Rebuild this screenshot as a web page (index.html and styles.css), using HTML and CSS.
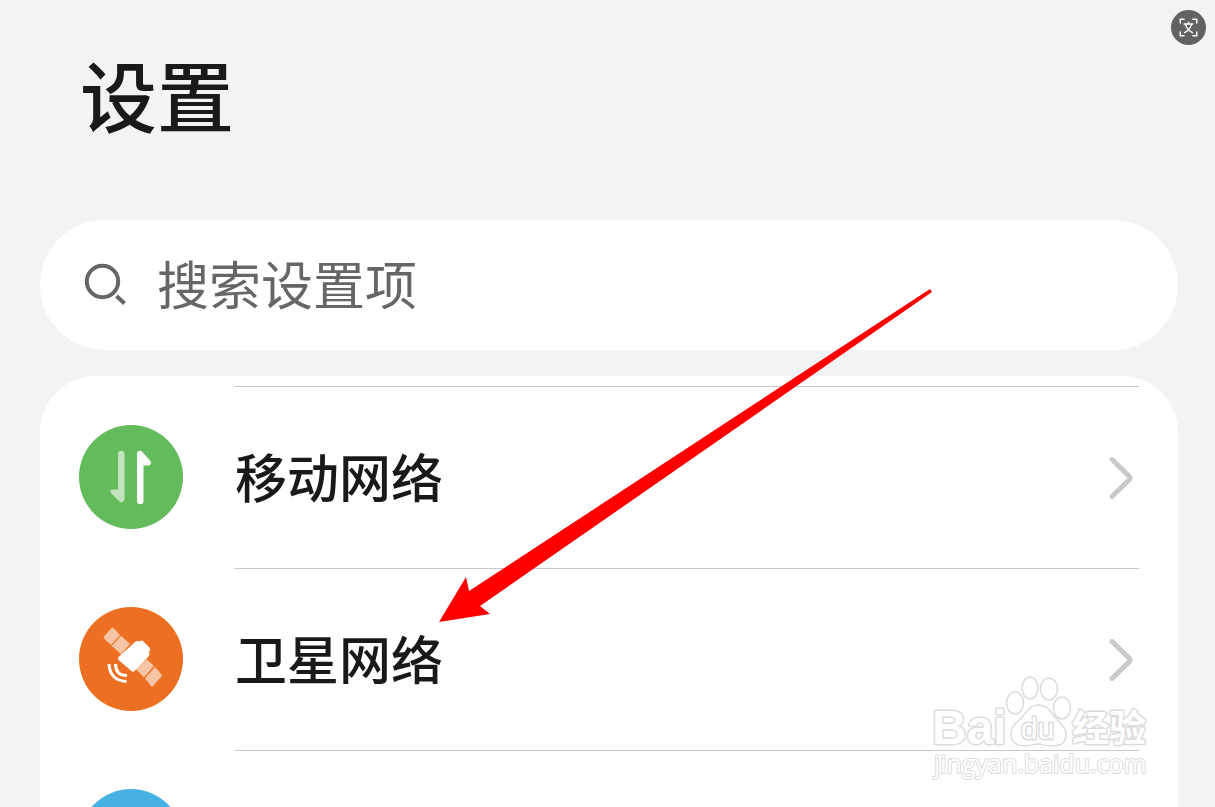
FILE: index.html
```
<!DOCTYPE html>
<html lang="zh-CN">
    <head>
        <meta charset="utf-8">
        <meta name="viewport" content="width=device-width, initial-scale=1">
        <title>设置</title>
        <link rel="stylesheet" href="styles.css">
    </head>
    <body>
        <header>
            <h1>设置</h1>
        </header>
        <main>
            <form class="search">
                <svg class="search-icon" viewBox="0 0 44 44" aria-hidden="true">
                    <circle cx="18.500" cy="18.500" r="15.700"/>
                    <path d="M32.500 33L40.500 40.500"/>
                </svg>
                <input type="search" aria-label="搜索设置项" placeholder="搜索设置项">
            </form>
            <ul class="list">
                <li>
                    <a href="#mobile">
                        <span class="icon green">
                            <svg viewBox="0 0 104 104" aria-hidden="true">
                                <path class="faded" d="M39 29a3 3 0 0 1 6.500 0V74.500a3 3 0 0 1-5 2L32 68c-1.500-2 0-3.500 2-3.500h5z"/>
                                <path d="M58 29a3 3 0 0 1 5-2.500L71.500 36c1.500 2 0 4.500-2 4.500h-5V76a3 3 0 0 1-6.500 0z"/>
                            </svg>
                        </span>
                        <span class="body">
                            <span class="name">移动网络</span>
                            <svg class="chevron" viewBox="0 0 24 42" aria-hidden="true"><path d="M3 2.500L20 19q2 2 0 4L3 39.500"/></svg>
                        </span>
                    </a>
                </li>
                <li>
                    <a href="#satellite">
                        <span class="icon orange">
                            <svg viewBox="0 0 104 104" aria-hidden="true">
                                <g class="faded">
                                    <path d="M34.500 21l6.500 7-9 10-7-6.500q-1-1 0-2l7.500-8.500q1-1 2 0z"/>
                                    <path d="M42 28.700l9 8.300-9 10.300-9.300-8.600z"/>
                                    <path d="M67.700 52.300L75 59 65 70.300 56.700 62z"/>
                                    <path d="M76 60l6.500 7.500q1 1 0 2L74 79q-1 1-2 0l-6-7.700z"/>
                                </g>
                                <path d="M56 35q1-1 2.500-1l1.500.5 2-.8q1.500-.4 2.500.8l6 6q1 1 .5 2.500l-1 1.500.5 2.500q0 1.500-1 2.500L55.500 64q-1.500 1.500-3 0l-13-11q-1.500-1.500 0-3z"/>
                                <path class="wave" d="M36.500 57q0 11.500 11.500 11.500M30 57q1 16.500 17.500 17.500"/>
                            </svg>
                        </span>
                        <span class="body">
                            <span class="name">卫星网络</span>
                            <svg class="chevron" viewBox="0 0 24 42" aria-hidden="true"><path d="M3 2.500L20 19q2 2 0 4L3 39.500"/></svg>
                        </span>
                    </a>
                </li>
                <li>
                    <div class="row">
                        <span class="icon blue"></span>
                        <span class="body"></span>
                    </div>
                </li>
            </ul>
        </main>

        <button class="translate" type="button" aria-label="翻译">
            <svg viewBox="0 0 36 36" aria-hidden="true">
                <path d="M9.500 14v-4.500H14M22 9.500h4.500V14M26.500 22v4.500H22M14 26.500H9.500V22"/>
                <path d="M18 12v2.500M13 14.500h10M15 15q1.500 5.500 7.500 8.500M21 15q-1.500 5.500-7.500 8.500"/>
            </svg>
        </button>

        <svg class="arrow" viewBox="0 0 494 334" aria-hidden="true">
            <path d="M0 333L27 288 30 302 491 0 493 3 41 317 51 325z"/>
        </svg>

        <svg class="watermark" viewBox="0 0 240 115" role="img" aria-label="Baidu 经验">
            <text class="bai" x="12" y="74">Bai</text>
            <ellipse cx="95" cy="33" rx="8.500" ry="11"/>
            <ellipse cx="110" cy="18" rx="8" ry="11"/>
            <ellipse cx="129" cy="19" rx="8.500" ry="11"/>
            <ellipse cx="142" cy="38" rx="8.500" ry="11"/>
            <path d="M118 35c8 0 11 4 16 11s12 10 12 19-7 11-14 11-9-2-14-2-8 2-14 2-13-3-13-12 7-12 12-18 8-11 15-11z"/>
            <text class="du" x="101" y="69">du</text>
            <text class="jingyan" x="152" y="72">经验</text>
            <text class="site" x="14" y="103">jingyan.baidu.com</text>
        </svg>
    </body>
</html>
```
FILE: styles.css
```
* {
    box-sizing: border-box;
}

body {
    margin: 0;
    height: 100vh;
    overflow: hidden;
    position: relative;
    font-family: "Noto Sans CJK SC", "Noto Sans", sans-serif;
    color: #19191a;
    background-color: #f1f3f5;
}

header {
    padding: 34px 80px 66px;
}

h1 {
    margin: 0;
    font-size: 77px;
    line-height: 120px;
    font-weight: 500;
}

main {
    padding: 0 37px 0 40px;
}

.search {
    display: flex;
    align-items: center;
    height: 130px;
    padding: 0 44px;
    gap: 29px;
    border-radius: 65px;
    background-color: #fff;
}

.search-icon {
    width: 44px;
    height: 44px;
    fill: none;
    stroke: #666;
    stroke-width: 4;
}

.search input {
    flex: 1;
    min-width: 0;
    height: 84px;
    padding: 0 0 5px;
    border: none;
    outline: none;
    background: transparent;
    font-family: inherit;
    font-size: 52px;
    color: #19191a;
}

.search input::placeholder {
    color: #666;
    opacity: 1;
}

.list {
    list-style: none;
    margin: 26px 0 0;
    padding: 10px 39px 0;
    border-radius: 56px 56px 0 0;
    background-color: #fff;
}

.list a,
.row {
    display: flex;
    align-items: center;
    gap: 52px;
    height: 182px;
    color: inherit;
    text-decoration: none;
}

.icon {
    width: 104px;
    height: 104px;
    border-radius: 50%;
}

.icon svg {
    display: block;
    fill: #fff;
}

.faded {
    opacity: 0.6;
}

.wave {
    fill: none;
    stroke: #fff;
    stroke-width: 3;
}

.green {
    background-color: #64bb5c;
}

.orange {
    background-color: #ed6f21;
}

.blue {
    background-color: #46b1e3;
}

.body {
    flex: 1;
    display: flex;
    align-items: center;
    justify-content: space-between;
    height: 100%;
    padding-right: 6px;
    border-top: 1px solid #c8c8c8;
    font-size: 52px;
    font-weight: 500;
}

.name {
    padding-bottom: 5px;
}

.chevron {
    width: 24px;
    height: 42px;
    fill: none;
    stroke: #c9c9c9;
    stroke-width: 5;
    stroke-linecap: round;
}

.translate {
    position: absolute;
    top: 10px;
    right: 9px;
    width: 35px;
    height: 35px;
    padding: 0;
    border: none;
    border-radius: 50%;
    background-color: #626262;
}

.translate svg {
    display: block;
    fill: none;
    stroke: #fff;
    stroke-width: 1.5;
}

/* pointer drawn over the list */
.arrow {
    position: absolute;
    top: 289px;
    left: 439px;
    width: 494px;
    height: 334px;
    fill: #fe0000;
    pointer-events: none;
}

.watermark {
    position: absolute;
    right: 55px;
    bottom: 22px;
    width: 240px;
    height: 115px;
    fill: #fff;
    stroke: #dcdcdc;
    stroke-width: 1.5;
    pointer-events: none;
}

.watermark text {
    font-family: "Liberation Sans", Arial, sans-serif;
    paint-order: stroke;
    stroke-width: 3;
    stroke-linejoin: round;
}

.bai {
    font-size: 48px;
    font-weight: bold;
}

.du {
    font-size: 30px;
}

.watermark .jingyan {
    font-family: "Noto Sans CJK SC", sans-serif;
    font-size: 37px;
    font-weight: 700;
}

.watermark .site {
    font-family: "Open Sans", sans-serif;
    font-size: 25px;
    stroke-width: 2;
}
```
